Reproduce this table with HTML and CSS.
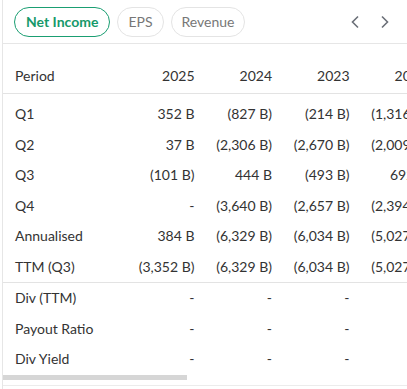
FILE: index.html
```html
<!DOCTYPE html>
<html>
<head>
<meta charset="utf-8">
<link rel="stylesheet" href="styles.css">
</head>
<body>
<div class="panel">
  <div class="toolbar">
    <div class="tabs">
      <button class="pill active">Net Income</button>
      <button class="pill">EPS</button>
      <button class="pill">Revenue</button>
    </div>
    <div class="arrows">
      <button class="arrow" aria-label="Previous"><svg width="10" height="14" viewBox="0 0 10 14"><path d="M8 1.5 L2.5 7 L8 12.5" fill="none" stroke="#6b6f78" stroke-width="1.6"/></svg></button>
      <button class="arrow" aria-label="Next"><svg width="10" height="14" viewBox="0 0 10 14"><path d="M2 1.5 L7.5 7 L2 12.5" fill="none" stroke="#6b6f78" stroke-width="1.6"/></svg></button>
    </div>
  </div>
  <div class="scroller">
    <table class="grid">
      <colgroup>
        <col class="c-label">
        <col class="c-val"><col class="c-val"><col class="c-val"><col class="c-val"><col class="c-val">
        <col class="c-val"><col class="c-val"><col class="c-val"><col class="c-val"><col class="c-val">
      </colgroup>
      <thead>
        <tr><th class="lbl">Period</th><th>2025</th><th>2024</th><th>2023</th><th>2022</th><th>2021</th><th>2020</th><th>2019</th><th>2018</th><th>2017</th><th>2016</th></tr>
      </thead>
      <tbody class="grp first">
        <tr><td class="lbl">Q1</td><td>352 B</td><td>(827 B)</td><td>(214 B)</td><td>(1,316 B)</td><td>-</td><td>-</td><td>-</td><td>-</td><td>-</td><td>-</td></tr>
        <tr><td class="lbl">Q2</td><td>37 B</td><td>(2,306 B)</td><td>(2,670 B)</td><td>(2,009 B)</td><td>-</td><td>-</td><td>-</td><td>-</td><td>-</td><td>-</td></tr>
        <tr><td class="lbl">Q3</td><td>(101 B)</td><td>444 B</td><td>(493 B)</td><td>692 B</td><td>-</td><td>-</td><td>-</td><td>-</td><td>-</td><td>-</td></tr>
        <tr><td class="lbl">Q4</td><td>-</td><td>(3,640 B)</td><td>(2,657 B)</td><td>(2,394 B)</td><td>-</td><td>-</td><td>-</td><td>-</td><td>-</td><td>-</td></tr>
        <tr><td class="lbl">Annualised</td><td>384 B</td><td>(6,329 B)</td><td>(6,034 B)</td><td>(5,027 B)</td><td>-</td><td>-</td><td>-</td><td>-</td><td>-</td><td>-</td></tr>
        <tr><td class="lbl">TTM (Q3)</td><td>(3,352 B)</td><td>(6,329 B)</td><td>(6,034 B)</td><td>(5,027 B)</td><td>-</td><td>-</td><td>-</td><td>-</td><td>-</td><td>-</td></tr>
      </tbody>
      <tbody class="grp second">
        <tr><td class="lbl">Div (TTM)</td><td>-</td><td>-</td><td>-</td><td></td><td></td><td></td><td></td><td></td><td></td><td></td></tr>
        <tr><td class="lbl">Payout Ratio</td><td>-</td><td>-</td><td>-</td><td></td><td></td><td></td><td></td><td></td><td></td><td></td></tr>
        <tr><td class="lbl">Div Yield</td><td>-</td><td>-</td><td>-</td><td></td><td></td><td></td><td></td><td></td><td></td><td></td></tr>
      </tbody>
    </table>
  </div>
  <div class="hscroll"><div class="hscroll-thumb"></div></div>
  <div class="footer-rule"></div>
</div>
</body>
</html>
```

FILE: styles.css
```css
* { box-sizing: border-box; }
html, body { margin: 0; padding: 0; background: #fff; }
body {
  font-family: "Lato", "Open Sans", sans-serif;
  color: #333;
  font-size: 14px;
  overflow: hidden;
}
.panel {
  margin-left: 2px;
  border-left: 1px solid #e6e6e6;
  height: 389px;
}
.toolbar {
  display: flex;
  align-items: center;
  justify-content: space-between;
  padding: 7px 0 6px 11px;
  border-bottom: 1px solid #e6e6e6;
}
.tabs { display: flex; gap: 7px; }
.pill {
  height: 30px;
  padding: 0 10px;
  margin: 0;
  border-radius: 15px;
  border: 1px solid #e4e4e4;
  background: #fff;
  color: #777;
  font-family: inherit;
  font-size: 14px;
  line-height: 28px;
}
.pill.active {
  padding: 0 11px;
  border-color: #1a9e72;
  color: #16996a;
  font-weight: 700;
}
.arrows { display: flex; gap: 14px; padding-right: 14px; }
.arrow {
  width: 16px; height: 20px; padding: 0; border: 0; background: none;
  display: flex; align-items: center; justify-content: center;
}
.scroller {
  overflow: hidden;
}
.grid {
  border-collapse: collapse;
  table-layout: fixed;
  width: 889px;
}
.c-label { width: 114px; }
.c-val { width: 77.5px; }
.grid th, .grid td {
  text-align: right;
  font-weight: 400;
  white-space: nowrap;
  padding: 5px 0;
  line-height: 20.5px;
}
.grid .lbl { text-align: left; padding-left: 12px; }
.grid thead th {
  padding-top: 22px;
  padding-bottom: 7px;
  line-height: 20px;
  border-bottom: 1px solid #e3e3e3;
}
.grp.first tr:first-child td { padding-top: 10px; }
.grp.second tr:first-child td { border-top: 1px solid #e3e3e3; }
.hscroll {
  height: 5px;
}
.hscroll-thumb {
  width: 184px;
  height: 5px;
  background: #d6d6d6;
}
.footer-rule {
  margin-top: 5px;
  border-top: 1px solid #ececec;
}
```
